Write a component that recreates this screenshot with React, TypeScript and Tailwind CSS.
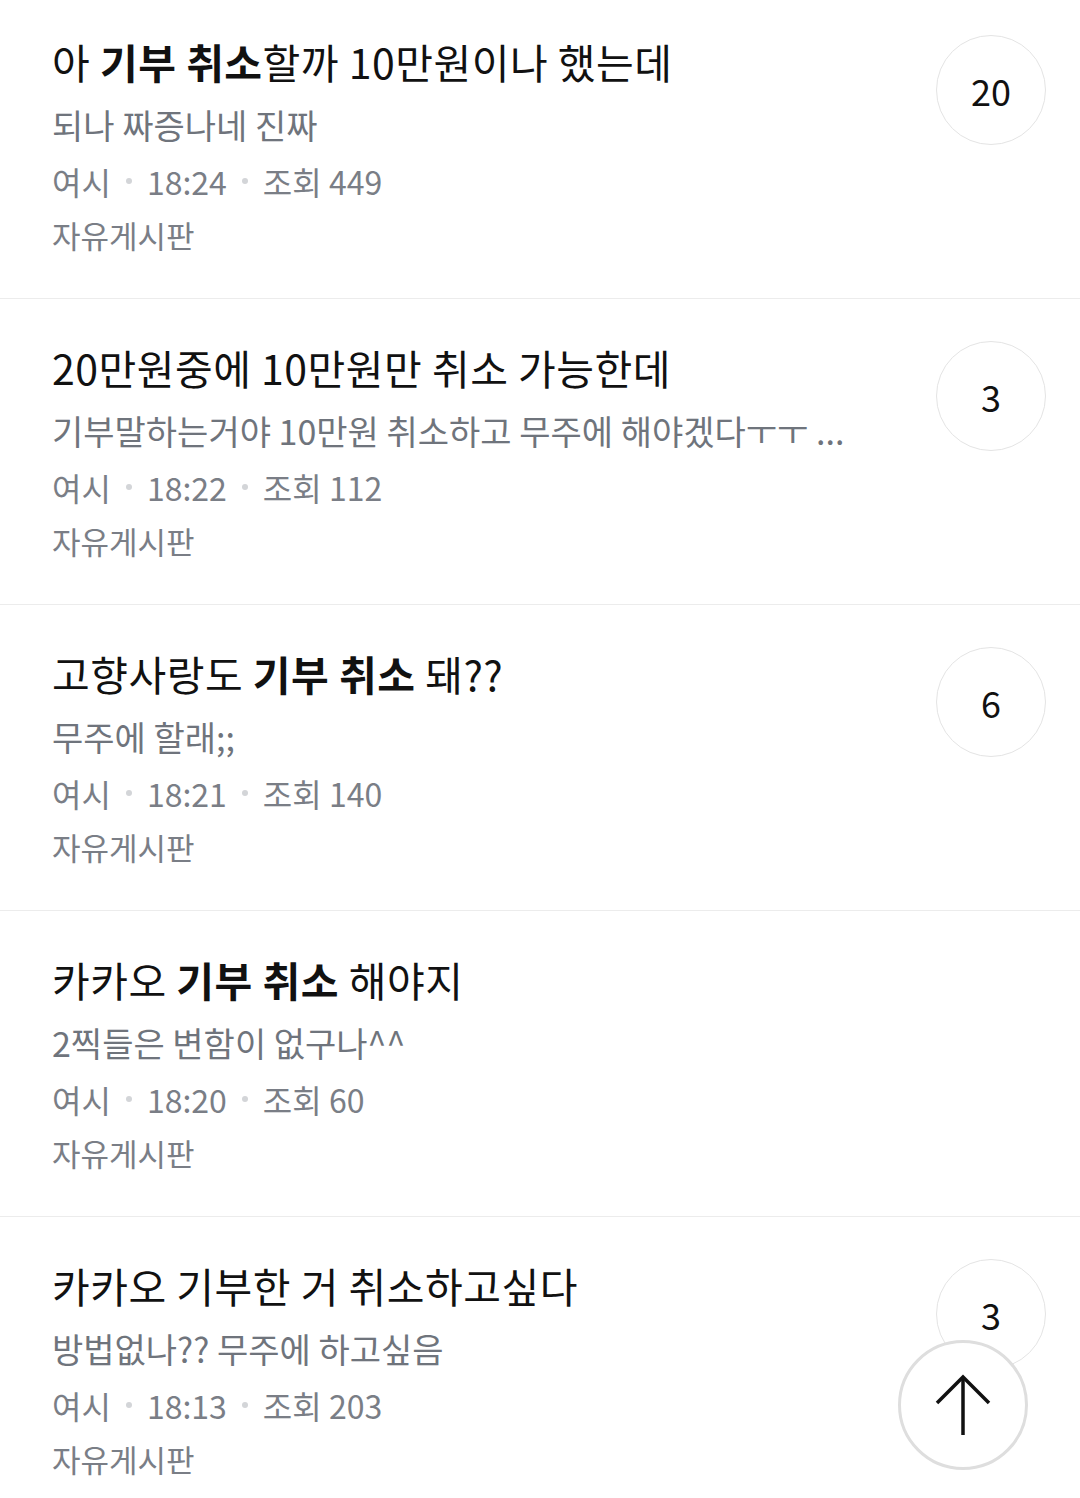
import React from "react";

type Post = {
  title: React.ReactNode;
  body: string;
  time: string;
  views: number;
  comments: number;
};

const posts: Post[] = [
  {
    title: (
      <>
        아 <b className="font-bold">기부 취소</b>할까 10만원이나 했는데
      </>
    ),
    body: "되나 짜증나네 진짜",
    time: "18:24",
    views: 449,
    comments: 20,
  },
  {
    title: <>20만원중에 10만원만 취소 가능한데</>,
    body: "기부말하는거야 10만원 취소하고 무주에 해야겠다ㅜㅜ ...",
    time: "18:22",
    views: 112,
    comments: 3,
  },
  {
    title: (
      <>
        고향사랑도 <b className="font-bold">기부 취소</b> 돼??
      </>
    ),
    body: "무주에 할래;;",
    time: "18:21",
    views: 140,
    comments: 6,
  },
  {
    title: (
      <>
        카카오 <b className="font-bold">기부 취소</b> 해야지
      </>
    ),
    body: "2찍들은 변함이 없구나^^",
    time: "18:20",
    views: 60,
    comments: 0,
  },
  {
    title: <>카카오 기부한 거 취소하고싶다</>,
    body: "방법없나?? 무주에 하고싶음",
    time: "18:13",
    views: 203,
    comments: 3,
  },
];

function Dot() {
  return <span className="mx-[15px] inline-block h-[6px] w-[6px] rounded-full bg-[#d3d5d8]" />;
}

function PostRow({ post }: { post: Post }) {
  return (
    <div className="flex justify-between border-b border-[#ececec] pl-[52px] pr-[34px] pt-[39px] pb-[36px]">
      <div className="flex min-w-0 flex-col">
        <h2 className="text-[41px] font-normal leading-[58px] tracking-[0.5px] text-[#111] whitespace-nowrap">{post.title}</h2>
        <p className="mt-[6px] text-[34px] leading-[58px] text-[#6f747c] whitespace-nowrap">{post.body}</p>
        <div className="flex items-center text-[32px] leading-[54px] text-[#7a7e86]">
          <span>여시</span>
          <Dot />
          <span>{post.time}</span>
          <Dot />
          <span>조회 {post.views}</span>
        </div>
        <p className="text-[31px] leading-[54px] text-[#7a7e86]">자유게시판</p>
      </div>
      {post.comments > 0 && (
        <div className="mt-[3px] flex h-[110px] w-[110px] shrink-0 items-center justify-center rounded-full border border-[#e4e4e4] text-[36px] text-[#111]">
          {post.comments}
        </div>
      )}
    </div>
  );
}

export default function App() {
  return (
    <div
      className="relative h-[1498px] w-[1080px] overflow-hidden bg-white"
      style={{ fontFamily: '"Noto Sans CJK KR", "Noto Sans", sans-serif' }}
    >
      <div className="-mt-[7px]">
        {posts.map((p, i) => (
          <PostRow key={i} post={p} />
        ))}
      </div>
      <button className="absolute left-[898px] top-[1340px] flex h-[130px] w-[130px] items-center justify-center rounded-full border-[3px] border-[#dedede] bg-white">
        <svg width="60" height="64" viewBox="0 0 60 64" fill="none" stroke="#111" strokeWidth="3.5">
          <path d="M30 4 V62" />
          <path d="M4 30 L30 4 L56 30" />
        </svg>
      </button>
    </div>
  );
}
